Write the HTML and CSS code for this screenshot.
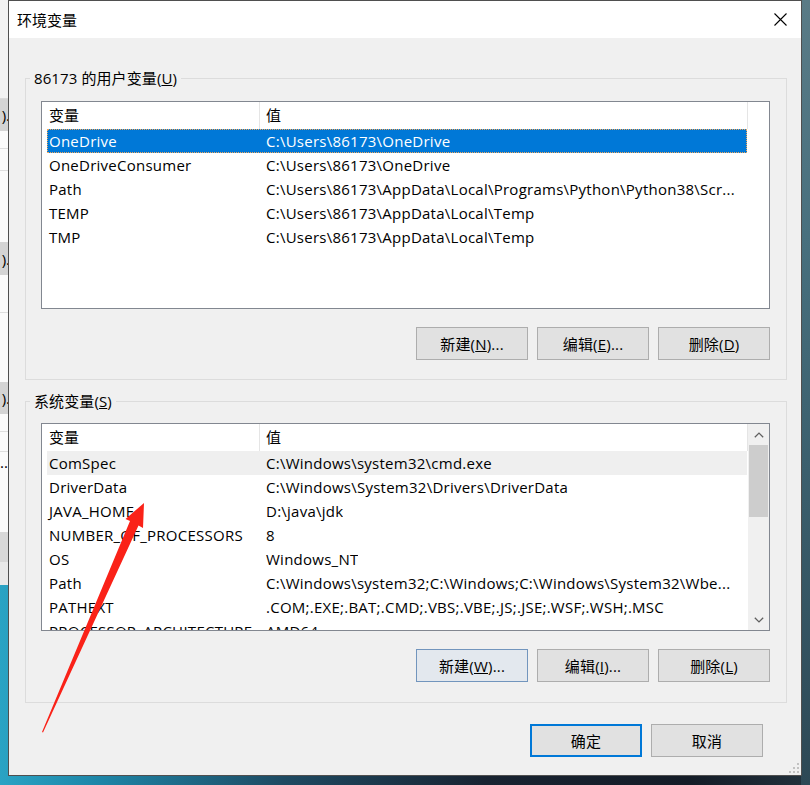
FILE: index.html
```html
<!DOCTYPE html>
<html lang="zh-CN">
<head>
<meta charset="utf-8">
<title>环境变量</title>
<link rel="stylesheet" href="styles.css">
</head>
<body>
<div class="desktop">
  <div class="bgwin">
    <div class="bw-blank bw-h99"></div>
    <div class="bw-btn bw-h32"><span>).</span></div>
    <div class="bw-white bw-h17"></div>
    <div class="bw-line"></div>
    <div class="bw-white bw-h21"></div>
    <div class="bw-line"></div>
    <div class="bw-white bw-h71"></div>
    <div class="bw-btn bw-h33"><span>).</span></div>
    <div class="bw-white bw-h37"></div>
    <div class="bw-line"></div>
    <div class="bw-white bw-h69"></div>
    <div class="bw-btn bw-h32"><span>).</span></div>
    <div class="bw-white bw-h17"></div>
    <div class="bw-line"></div>
    <div class="bw-white bw-h19"></div>
    <div class="bw-line"></div>
    <div class="bw-white bw-h20"><span>...</span></div>
    <div class="bw-white bw-h60"></div>
    <div class="bw-gray bw-h30"></div>
  </div>

  <div class="dialog">
    <div class="titlebar">
      <span class="title">环境变量</span>
      <svg class="close" width="13" height="13" viewBox="0 0 13 13"><path d="M0.5 0.5 L12.5 12.5 M12.5 0.5 L0.5 12.5" stroke="#000" stroke-width="1.1" fill="none"/></svg>
    </div>
    <div class="content">
      <div class="group group-user">
        <div class="group-label">86173 的用户变量(<u>U</u>)</div>
        <div class="list list-user">
          <div class="list-body">
            <div class="head"><span class="hk">变量</span><span class="hv">值</span></div>
            <div class="row selected"><span class="k">OneDrive</span><span class="v">C:\Users\86173\OneDrive</span></div>
            <div class="row"><span class="k">OneDriveConsumer</span><span class="v">C:\Users\86173\OneDrive</span></div>
            <div class="row"><span class="k">Path</span><span class="v">C:\Users\86173\AppData\Local\Programs\Python\Python38\Scr...</span></div>
            <div class="row"><span class="k">TEMP</span><span class="v">C:\Users\86173\AppData\Local\Temp</span></div>
            <div class="row"><span class="k">TMP</span><span class="v">C:\Users\86173\AppData\Local\Temp</span></div>
          </div>
        </div>
        <div class="btns">
          <button class="btn">新建(<u>N</u>)...</button>
          <button class="btn">编辑(<u>E</u>)...</button>
          <button class="btn">删除(<u>D</u>)</button>
        </div>
      </div>

      <div class="group group-sys">
        <div class="group-label">系统变量(<u>S</u>)</div>
        <div class="list list-sys">
          <div class="list-body">
            <div class="head"><span class="hk">变量</span><span class="hv">值</span></div>
            <div class="row hover"><span class="k">ComSpec</span><span class="v">C:\Windows\system32\cmd.exe</span></div>
            <div class="row"><span class="k">DriverData</span><span class="v">C:\Windows\System32\Drivers\DriverData</span></div>
            <div class="row"><span class="k">JAVA_HOME</span><span class="v">D:\java\jdk</span></div>
            <div class="row"><span class="k">NUMBER_OF_PROCESSORS</span><span class="v">8</span></div>
            <div class="row"><span class="k">OS</span><span class="v">Windows_NT</span></div>
            <div class="row"><span class="k">Path</span><span class="v">C:\Windows\system32;C:\Windows;C:\Windows\System32\Wbe...</span></div>
            <div class="row"><span class="k">PATHEXT</span><span class="v">.COM;.EXE;.BAT;.CMD;.VBS;.VBE;.JS;.JSE;.WSF;.WSH;.MSC</span></div>
            <div class="row"><span class="k">PROCESSOR_ARCHITECTURE</span><span class="v">AMD64</span></div>
          </div>
          <div class="scroll">
            <div class="sbtn"><svg width="10" height="6" viewBox="0 0 10 6"><path d="M0.8 5.3 L5 1.1 L9.2 5.3" stroke="#606060" stroke-width="1.3" fill="none"/></svg></div>
            <div class="thumb"></div>
            <div class="strack"></div>
            <div class="sbtn"><svg width="10" height="6" viewBox="0 0 10 6"><path d="M0.8 0.7 L5 4.9 L9.2 0.7" stroke="#606060" stroke-width="1.3" fill="none"/></svg></div>
          </div>
        </div>
        <div class="btns">
          <button class="btn btn-hot">新建(<u>W</u>)...</button>
          <button class="btn">编辑(<u>I</u>)...</button>
          <button class="btn">删除(<u>L</u>)</button>
        </div>
      </div>

      <div class="footer">
        <button class="btn btn-default">确定</button>
        <button class="btn">取消</button>
      </div>
    </div>
    <svg class="grip" width="12" height="12" viewBox="0 0 12 12">
      <rect x="9" y="1" width="2" height="2" fill="#c2c2c2"/>
      <rect x="5" y="5" width="2" height="2" fill="#c2c2c2"/>
      <rect x="9" y="5" width="2" height="2" fill="#c2c2c2"/>
      <rect x="1" y="9" width="2" height="2" fill="#c2c2c2"/>
      <rect x="5" y="9" width="2" height="2" fill="#c2c2c2"/>
      <rect x="9" y="9" width="2" height="2" fill="#c2c2c2"/>
    </svg>
  </div>

  <svg class="arrow" width="810" height="785" viewBox="0 0 810 785">
    <polygon points="42,732 130,521 125.5,519 144,503 143,528 138.5,525.5 43,732.5" fill="#fa2218"/>
  </svg>
</div>
</body>
</html>
```

FILE: styles.css
```css
html, body {
  margin: 0;
  padding: 0;
}

body {
  width: 810px;
  height: 785px;
  overflow: hidden;
  font-family: "Open Sans", "Noto Sans CJK SC", sans-serif;
  font-size: 15px;
  color: #000;
  background:
    linear-gradient(to bottom, #5a7b86 0%, #48707e 30%, #3b5f6d 60%, #2d4855 100%) right top / 9px 100% no-repeat,
    linear-gradient(to right, #2aa3c4 0%, #1d86a8 12%, #1e4a62 35%, #182331 60%, #141c27 85%, #22313c 100%);
}

.desktop {
  position: relative;
  width: 810px;
  height: 785px;
}

/* background window at the far left */
.bgwin {
  position: absolute;
  left: 0;
  top: 0;
  width: 8px;
  height: 585px;
  overflow: hidden;
  display: flex;
  flex-direction: column;
  background: #e9e9e9;
  font-size: 15px;
  line-height: 20px;
}
.bgwin span {
  display: block;
  white-space: nowrap;
  text-align: right;
  margin-right: -2px;
}
.bw-blank { background: #f2f2f2; border-bottom: 1px solid #dadada; box-sizing: border-box; }
.bw-btn { background: #d4d4d4; display: flex; align-items: center; justify-content: flex-end; }
.bw-white { background: #fbfbfb; }
.bw-gray { background: #d8d8d8; }
.bw-line { height: 1px; background: #dedede; }
.bw-h99 { height: 99px; }
.bw-h32 { height: 32px; }
.bw-h33 { height: 33px; }
.bw-h17 { height: 17px; }
.bw-h19 { height: 19px; }
.bw-h20 { height: 20px; }
.bw-h21 { height: 21px; }
.bw-h30 { height: 30px; }
.bw-h37 { height: 37px; }
.bw-h60 { height: 60px; }
.bw-h69 { height: 69px; }
.bw-h71 { height: 71px; }

/* dialog window */
.dialog {
  position: absolute;
  left: 8px;
  top: 0;
  width: 794px;
  height: 776px;
  box-sizing: border-box;
  border: 1px solid #4f4f4f;
  background: #f0f0f0;
  display: flex;
  flex-direction: column;
}

.titlebar {
  height: 37px;
  flex: none;
  background: #fff;
  display: flex;
  align-items: center;
  justify-content: space-between;
  padding: 0 14px 0 8px;
}
.title {
  font-size: 15px;
  line-height: 20px;
}
.close {
  display: block;
}

.content {
  padding: 0 14px 0 16px;
  display: flex;
  flex-direction: column;
}

.group {
  border: 1px solid #dcdcdc;
  padding: 0 16px 19px 15px;
}
.group-user {
  margin-top: 40px;
}
.group-sys {
  margin-top: 21px;
  padding-bottom: 20px;
}
.group-label {
  width: fit-content;
  height: 20px;
  line-height: 20px;
  margin: -11px 0 0 -11px;
  padding: 0 4px;
  background: #f0f0f0;
  white-space: nowrap;
  letter-spacing: 0.1px;
}
.group-user .list { margin-top: 13px; }
.group-sys .list { margin-top: 12px; }

.list {
  height: 208px;
  box-sizing: border-box;
  border: 1px solid #828790;
  background: #fff;
  display: flex;
  overflow: hidden;
}
.list-body {
  flex: 1;
  padding-left: 5px;
  overflow: hidden;
  min-width: 0;
}

.head {
  display: flex;
  height: 27px;
  line-height: 27px;
  white-space: nowrap;
}
.hk {
  width: 213px;
  flex: none;
  box-sizing: border-box;
  padding-left: 2px;
  border-right: 1px solid #e5e5e5;
}
.hv {
  width: 488px;
  flex: none;
  box-sizing: border-box;
  padding-left: 6px;
  border-right: 1px solid #e5e5e5;
}

.row {
  display: flex;
  width: 700px;
  height: 24px;
  line-height: 24px;
  white-space: nowrap;
  box-sizing: border-box;
  letter-spacing: 0.25px;
}
.k {
  width: 213px;
  flex: none;
  box-sizing: border-box;
  padding-left: 2px;
  overflow: hidden;
}
.v {
  padding-left: 6px;
  overflow: hidden;
}
.row.selected {
  background: #0078d7;
  color: #fff;
  outline: 1px dotted #f3a85a;
  outline-offset: -1px;
}
.row.hover {
  background: #efefef;
}

.scroll {
  width: 21px;
  flex: none;
  background: #f0f0f0;
  display: flex;
  flex-direction: column;
}
.sbtn {
  height: 21px;
  flex: none;
  display: flex;
  align-items: center;
  justify-content: center;
}
.sbtn svg { display: block; }
.thumb {
  height: 72px;
  flex: none;
  margin: 0 1px;
  background: #cdcdcd;
}
.strack { flex: 1; }

.btns {
  display: flex;
  justify-content: flex-end;
  gap: 9px;
  margin-top: 18px;
}

.btn {
  width: 112px;
  height: 33px;
  box-sizing: border-box;
  margin: 0;
  padding: 0;
  border: 1px solid #adadad;
  background: #e1e1e1;
  font-family: "Open Sans", "Noto Sans CJK SC", sans-serif;
  font-size: 15px;
  color: #000;
  line-height: 20px;
  text-align: center;
  white-space: nowrap;
  letter-spacing: 0.2px;
}
.btn-hot {
  background: #e3e8ee;
  border-color: #7295bd;
}
.btn-default {
  border: 2px solid #0078d7;
}

.footer {
  display: flex;
  justify-content: flex-end;
  gap: 9px;
  margin-top: 21px;
  margin-right: 24px;
}

.grip {
  position: absolute;
  right: 1px;
  bottom: 1px;
}

.arrow {
  position: absolute;
  left: 0;
  top: 0;
  pointer-events: none;
}
```
